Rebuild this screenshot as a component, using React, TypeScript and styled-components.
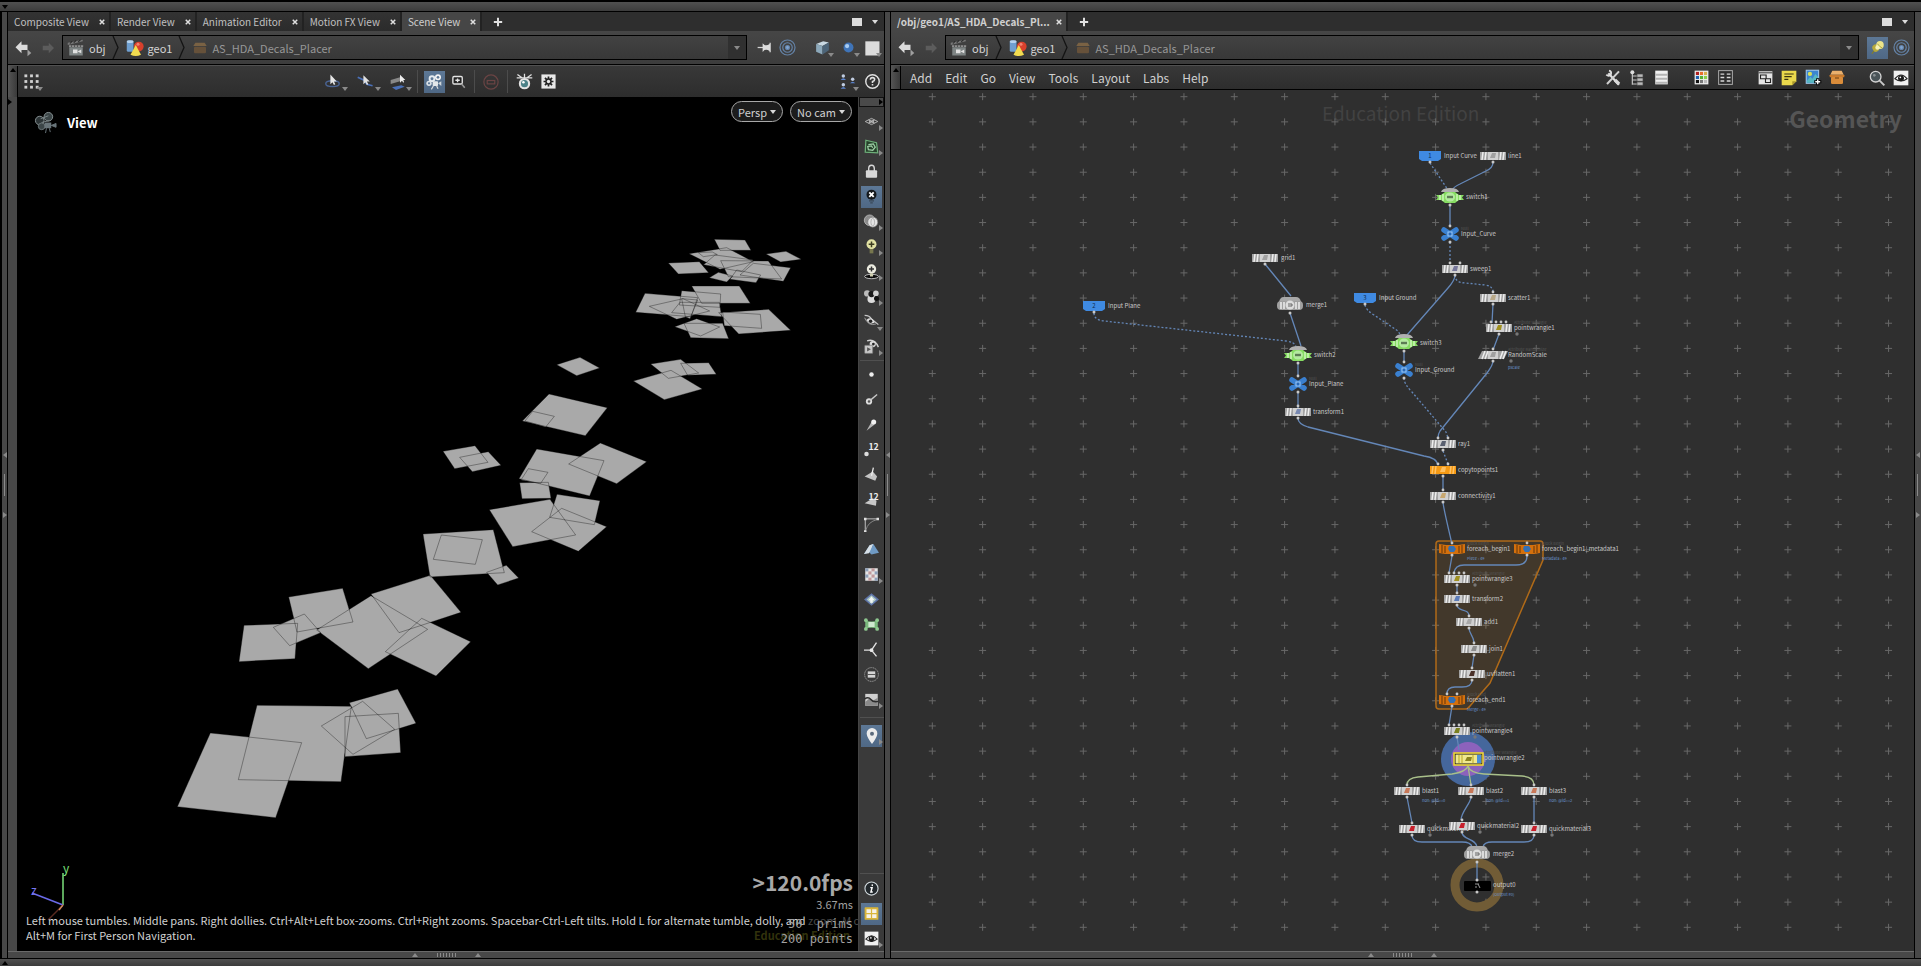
import React from "react";
import styled, { createGlobalStyle, css } from "styled-components";

const Global = createGlobalStyle`
  * { box-sizing: border-box; }
  body {
    margin: 0;
    background: #000;
    color: #c8c8c8;
    font: 11px/16px "Noto Sans CJK SC", "Noto Sans", sans-serif;
    overflow: hidden;
  }
  button, input {
    font: inherit;
    color: inherit;
    background: none;
    border: 0;
    padding: 0;
    margin: 0;
  }
  svg { display: block; }
`;

/* ---------- shell ---------- */

const Shell = styled.div`
  display: grid;
  grid-template-rows: 12px minmax(0, 1fr) 8px;
  height: 100vh;
`;

const Rail = styled.div<{ $bottom?: boolean }>`
  display: flex;
  align-items: center;
  padding-left: 2px;
  background: linear-gradient(#505050, #3c3c3c);
  border-top: ${(p) => (p.$bottom ? 1 : 2)}px solid #000;
  border-bottom: ${(p) => (p.$bottom ? 0 : 1)}px solid #000;
`;

const Desk = styled.div`
  display: flex;
  min-height: 0;
`;

const Splitter = styled.div<{ $width: number; $left?: number; $right?: number }>`
  flex: none;
  width: ${(p) => p.$width}px;
  display: flex;
  flex-direction: column;
  align-items: center;
  justify-content: center;
  gap: 16px;
  background: #484848;
  border: solid #000;
  border-width: 0 ${(p) => p.$right ?? 1}px 0 ${(p) => p.$left ?? 1}px;
`;

const Dots = styled.div<{ $vertical?: boolean }>`
  ${(p) => (p.$vertical ? "width: 4px; height: 22px;" : "width: 21px; height: 4px;")}
  background-image: radial-gradient(circle, #8a8a8a 34%, transparent 40%);
  background-size: 3px 2px;
`;

const Tri = styled.span<{ $dir: "up" | "down" | "left" | "right"; $size?: number; $color?: string }>`
  display: block;
  flex: none;
  width: 0;
  height: 0;
  ${(p) => {
    const s = p.$size ?? 3;
    const c = p.$color ?? "#8a8a8a";
    const side = { up: "bottom", down: "top", left: "right", right: "left" }[p.$dir];
    return css`
      border: ${s}px solid transparent;
      border-${side}: ${s + 1}px solid ${c};
      border-${{ bottom: "top", top: "bottom", right: "left", left: "right" }[side]!}-width: 0;
    `;
  }}
`;

const Pane = styled.section<{ $grow: number }>`
  flex: ${(p) => p.$grow} 1 0;
  min-width: 0;
  display: flex;
  flex-direction: column;
`;

const PaneFoot = styled.div`
  flex: none;
  height: 7px;
  display: flex;
  align-items: center;
  justify-content: center;
  gap: 18px;
  background: #484848;
  border-top: 1px solid #6a6a6a;
`;

/* ---------- tabs ---------- */

const TabBar = styled.div`
  flex: none;
  height: 19px;
  display: flex;
  align-items: stretch;
  background: #2e2e2e;
`;

const Tab = styled.div<{ $active?: boolean; $bold?: boolean }>`
  display: flex;
  align-items: center;
  padding: 0 4px 0 6px;
  gap: ${(p) => (p.$bold ? 6 : 10)}px;
  border-right: 2px solid #222;
  font-size: 10px;
  font-weight: ${(p) => (p.$bold ? 700 : 400)};
  color: ${(p) => (p.$active ? "#d0d0d0" : "#c0c0c0")};
  background: ${(p) => (p.$active ? "#464646" : "linear-gradient(#333, #2b2b2b)")};
`;

const Close = styled.button`
  width: 6px;
  height: 6px;
`;

const TabAdd = styled.button`
  width: 32px;
  display: grid;
  place-items: center;
`;

const TabEnd = styled.div`
  margin-left: auto;
  display: flex;
  align-items: center;
  gap: 10px;
  padding-right: 6px;
`;

const Square = styled.button`
  width: 10px;
  height: 8px;
  background: #dcdcdc;
`;

/* ---------- path bar ---------- */

const PathBar = styled.div`
  flex: none;
  height: 34px;
  display: flex;
  align-items: center;
  background: linear-gradient(#464646, #3c3c3c);
  border-bottom: 1px solid #000;
  padding: 0 1px 0 2px;
`;

const Path = styled.nav`
  flex: 1;
  min-width: 0;
  height: 25px;
  margin: 0 6px 0 2px;
  display: flex;
  align-items: center;
  border: 1px solid #000;
  background: linear-gradient(#424242, #383838);
`;

const Crumb = styled.a<{ $dim?: boolean }>`
  display: flex;
  align-items: center;
  gap: 4px;
  padding-left: 4px;
  color: ${(p) => (p.$dim ? "#979797" : "#d4d4d4")};
  text-decoration: none;
`;

const PathDrop = styled.button`
  margin-left: auto;
  align-self: stretch;
  width: 18px;
  display: grid;
  place-items: center;
  background: #303030;
`;

/* ---------- tool buttons ---------- */

const ToolButton = styled.button<{ $on?: boolean; $w?: number; $h?: number }>`
  position: relative;
  flex: none;
  width: ${(p) => p.$w ?? 24}px;
  height: ${(p) => p.$h ?? 24}px;
  display: grid;
  place-items: center;
  ${(p) => p.$on && "background: linear-gradient(#5d7896, #4f6885) center / 21px 22px no-repeat;"}
`;

const Badge = styled.span`
  position: absolute;
  right: 1px;
  bottom: 3px;
`;

const Gap = styled.span<{ $w: number }>`
  flex: none;
  width: ${(p) => p.$w}px;
`;

const Rule = styled.span`
  flex: none;
  width: 1px;
  height: 23px;
  margin: 0 4px;
  background: #4c4c4c;
`;

const Bar = styled.div<{ $h: number }>`
  flex: none;
  height: ${(p) => p.$h}px;
  display: flex;
  align-items: center;
  background: linear-gradient(#383838, #2d2d2d);
  border-top: 1px solid #505050;
`;

const Grip = styled.button<{ $w: number }>`
  flex: none;
  align-self: stretch;
  width: ${(p) => p.$w}px;
  display: flex;
  justify-content: center;
  padding-top: 2px;
  background: linear-gradient(90deg, #555, #3a3a3a);
  border-right: 1px solid #000;
`;

const Spring = styled.span`
  flex: 1;
`;

const Menu = styled.button`
  font-size: 12px;
  line-height: 20px;
  color: #d0d0d0;
`;

const Menus = styled.div`
  display: flex;
  gap: 13px;
  padding-left: 9px;
`;

/* ---------- viewport ---------- */

const ViewRow = styled.div`
  flex: 1;
  min-height: 0;
  display: flex;
`;

const ViewEdge = styled.div`
  flex: none;
  width: 9px;
  padding-top: 2px;
  background: #484848;
`;

const Viewport = styled.div`
  position: relative;
  flex: 1;
  min-width: 0;
  overflow: hidden;
  background: #000;
`;

const Fill = styled.svg`
  position: absolute;
  inset: 0;
  width: 100%;
  height: 100%;
`;

const ViewTitle = styled.div`
  position: absolute;
  left: 17px;
  top: 14px;
  display: flex;
  align-items: center;
  gap: 10px;
  font-size: 13px;
  font-weight: 700;
  color: #fff;
`;

const CamPills = styled.div`
  position: absolute;
  right: 6px;
  top: 4px;
  display: flex;
  gap: 7px;
`;

const Pill = styled.button`
  height: 21px;
  display: flex;
  align-items: center;
  gap: 3px;
  padding: 0 6px;
  border: 1px solid #a8a8a8;
  border-radius: 11px;
  background: #1c1c1c;
  color: #d0d0d0;
`;

const Hint = styled.p`
  position: absolute;
  left: 9px;
  bottom: 8px;
  margin: 0;
  line-height: 15px;
  white-space: nowrap;
  color: #d2d2d2;
`;

const Faint = styled.span`
  color: #4a4a4a;
`;

const Stats = styled.div`
  position: absolute;
  right: 5px;
  bottom: 4px;
  display: flex;
  flex-direction: column;
  align-items: flex-end;
  color: #a0a0a0;
`;

const Fps = styled.div`
  font-size: 21px;
  line-height: 26px;
  font-weight: 700;
  color: #a8a8a8;
`;

const Ms = styled.div`
  margin: 1px 0 5px;
`;

const Count = styled.pre`
  margin: 0;
  font: 12px/15px "DejaVu Sans Mono", monospace;
`;

const ViewMark = styled.div`
  position: absolute;
  right: 8px;
  bottom: 8px;
  line-height: 15px;
  font-weight: 700;
  color: #32320c;
`;

const Side = styled.div`
  flex: none;
  width: 26px;
  display: flex;
  flex-direction: column;
  align-items: center;
  background: #3a3a3a;
  border-left: 1px solid #444;
`;

const SideHead = styled.button`
  flex: none;
  width: 25px;
  height: 10px;
  margin-bottom: 2px;
  display: flex;
  align-items: center;
  justify-content: flex-end;
  background: #4a4a4a;
  border: 1px solid #111;
`;

const SideRule = styled.span<{ $m: number }>`
  flex: none;
  width: 24px;
  height: 1px;
  margin: ${(p) => p.$m}px 0;
  background: #505050;
`;

const Glyph = styled.svg`
  overflow: visible;
`;

/* ---------- icons ---------- */

const ICONS: Record<string, React.ReactNode> = {
  close: <path d="M9 9l6 6M15 9l-6 6" stroke="#e0e0e0" strokeWidth="2" />,
  plus: <path d="M12 7v10M7 12h10" stroke="#e0e0e0" strokeWidth="2.4" />,
  back: (
    <>
      <path d="M2 11l8-8v4.500h8v7h-8V19z" fill="#dcdcdc" />
      <path d="M18 14l5 4.500l-5 4.500z" fill="#a0a0a0" />
    </>
  ),
  fwd: <path d="M20 12l-7-7v4H5v6h8v4z" fill="#5c5c5c" />,
  obj: (
    <>
      <path d="M1 8l20-5v-2L1 5z" fill="#777" />
      <path d="M4 6l3-3M9 5l3-3M15 4l3-3" stroke="#222" strokeWidth="1.400" />
      <rect x="3" y="8" width="19" height="3" fill="#555" />
      <path d="M3 9.500h19" stroke="#bbb" strokeDasharray="2 2" strokeWidth="1.500" />
      <rect x="3" y="11" width="18" height="11" fill="#7e8484" />
      <rect x="8" y="14" width="6" height="5" fill="#e0e0e0" />
      <path d="M14 16.500l5-2.500v5z" fill="#e0e0e0" />
    </>
  ),
  geo: (
    <>
      <rect x="1" y="2" width="9" height="15" rx="2" fill="#6f9fd0" />
      <ellipse cx="5.500" cy="3.500" rx="4.500" ry="1.800" fill="#b5d2ee" />
      <circle cx="17" cy="10" r="6.500" fill="#d8402c" />
      <circle cx="16" cy="7" r="2" fill="#f08070" />
      <path d="M13 8l7 13q-7 3.500-14 0z" fill="#f2dc50" />
    </>
  ),
  box: (
    <>
      <path d="M5 4h14l3 5H2z" fill="#7a6244" />
      <rect x="3" y="10" width="18" height="10" rx="2" fill="#66513a" />
    </>
  ),
  pin: (
    <>
      <path d="M1 12h9" stroke="#d4d4d4" strokeWidth="2" />
      <path d="M9 5l3 3q4 1.500 8-1.500v-2h2v15h-2v-2q-4-3-8-1.500l-3 3z" fill="#dcdcdc" />
    </>
  ),
  target: (
    <g fill="none" stroke="#6483a8" strokeWidth="1.500">
      <circle cx="12" cy="12" r="9.500" />
      <circle cx="12" cy="12" r="6" />
      <circle cx="12" cy="12" r="2.500" fill="#7fa5d2" />
    </g>
  ),
  cube: (
    <>
      <path d="M3 7l10-4 8 2-9 5z" fill="#c8d8e2" />
      <path d="M3 7l9 3v12l-9-4z" fill="#8ca8ba" />
      <path d="M12 10l9-5v11l-9 6z" fill="#4c6478" />
    </>
  ),
  ball: (
    <>
      <circle cx="12" cy="12" r="7" fill="#3f74b8" />
      <circle cx="10" cy="10" r="3" fill="#a9ccf0" />
    </>
  ),
  sheet: <rect x="4" y="4" width="17" height="17" fill="#dcdcdc" />,
  dots: (
    <g fill="#d0d0d0">
      {[4, 12, 20].map((y) => [4, 12, 20].map((x) => <rect key={`${x}-${y}`} x={x - 2} y={y - 2} width="4" height="4" />))}
    </g>
  ),
  lasso: (
    <>
      <ellipse cx="12" cy="15" rx="9.500" ry="4" fill="none" stroke="#4a6494" strokeWidth="2" />
      <path d="M9 2v14l3-3 2 4 2-1-2-4h4z" fill="#e6e6e6" />
    </>
  ),
  brush: (
    <>
      <path d="M1 6l9 4 4 6 8 2" fill="none" stroke="#4a70b8" strokeWidth="2.500" />
      <path d="M9 3v13l3-3 2 4 2-1-2-4h4z" fill="#e0e0e0" />
    </>
  ),
  slice: (
    <>
      <path d="M1 9l14-4v6L1 15z" fill="#888" />
      <path d="M3 20l14-3 5 2-13 5z" fill="#4a70b8" />
      <path d="M15 1v12l3-3 2 3 1-1-1-3h3z" fill="#eee" />
    </>
  ),
  camera: (
    <>
      <circle cx="9" cy="7" r="5" fill="#e6ecf0" />
      <circle cx="18" cy="5" r="4.500" fill="#f4f4f4" />
      <circle cx="4.500" cy="14" r="4" fill="#dde3e8" />
      <circle cx="9" cy="7" r="2.200" fill="#5d7896" />
      <circle cx="18" cy="5" r="2" fill="#5d7896" />
      <circle cx="4.500" cy="14" r="1.700" fill="#5d7896" />
      <rect x="10" y="11" width="8" height="7" rx="1" fill="#e4e8ea" />
      <path d="M18 14l5-3v7z" fill="#cfd6da" />
      <path d="M11 18l-3 5M16 18l2 4" stroke="#ddd" strokeWidth="1.800" />
    </>
  ),
  camDim: (
    <>
      <circle cx="6" cy="10" r="4.500" fill="#2c3436" stroke="#8a9496" />
      <circle cx="15" cy="6" r="4.500" fill="#3c4648" stroke="#8a9496" />
      <circle cx="8" cy="16" r="3.500" fill="#3c4648" stroke="#6a7476" />
      <path d="M7 8l8-3M8 12l8-2" stroke="#7a8688" />
      <rect x="11" y="12" width="7" height="6" fill="#69757a" />
      <path d="M18 15l5-2v4zM13 18l-1 5M16 18l1 4" fill="#69757a" stroke="#69757a" />
    </>
  ),
  zoomBox: (
    <>
      <rect x="3" y="4" width="15" height="12" rx="2" fill="#222" stroke="#e4e4e4" strokeWidth="2.200" />
      <path d="M10.500 7v6M7 10h7" stroke="#e4e4e4" strokeWidth="2.200" />
      <path d="M17 16l5 6" stroke="#999" strokeWidth="2.400" />
    </>
  ),
  stop: (
    <g fill="none" stroke="#6b4444" strokeWidth="1.600">
      <circle cx="12" cy="12" r="9.500" />
      <rect x="7" y="10" width="10" height="4.500" />
    </g>
  ),
  orb: (
    <>
      <path d="M2 2l7 5M22 2l-7 5M1 7h22M12 1v6" stroke="#e0e0e0" strokeWidth="1.800" />
      <circle cx="12" cy="15" r="8" fill="#e4e4e4" />
      <circle cx="12" cy="15" r="5" fill="#4c8288" />
      <circle cx="10.500" cy="13" r="1.800" fill="#fff" />
    </>
  ),
  gear: (
    <>
      <rect x="2" y="2" width="20" height="20" fill="#e8e8e8" />
      <path d="M12 5v14M5 12h14M7 7l10 10M17 7L7 17" stroke="#222" strokeWidth="2.400" />
      <circle cx="12" cy="12" r="4.500" fill="#222" />
      <circle cx="12" cy="12" r="2.400" fill="#e8e8e8" />
    </>
  ),
  people: (
    <g>
      {[[5, 3], [19, 8], [5, 16]].map(([x, y]) => (
        <g key={`${x}-${y}`}>
          <circle cx={x} cy={y} r="2.600" fill="#c0cce0" />
          <path d={`M${x - 4} ${y + 6}q4-5 8 0z`} fill="#5a84d0" />
        </g>
      ))}
    </g>
  ),
  help: (
    <>
      <circle cx="12" cy="12" r="9.500" fill="none" stroke="#e0e0e0" strokeWidth="2" />
      <path d="M9 9.500q0-3 3-3t3 2.500q0 2-3 3v2M12 15.500v2.200" fill="none" stroke="#e0e0e0" strokeWidth="2.200" />
    </>
  ),
  yellowPin: (
    <>
      <path d="M3 22l6-8" stroke="#8a8020" strokeWidth="1.800" />
      <ellipse cx="9" cy="13" rx="5" ry="6" fill="#b8aa3c" transform="rotate(-30 9 13)" />
      <ellipse cx="16" cy="8" rx="6" ry="6.500" fill="#ece58a" />
      <circle cx="12" cy="12" r="3.500" fill="#f6f2b8" />
      <path d="M12 6q3 5 8 7" fill="none" stroke="#a09430" strokeWidth="1.200" />
    </>
  ),
  plane: (
    <g fill="none" stroke="#bcbcbc" strokeWidth="1.400">
      <path d="M2 12l10-5 10 5-10 5zM7 9.500l10 5M17 9.500l-10 5M12 10l4 2-4 2-4-2z" />
    </g>
  ),
  greenBox: (
    <>
      <path d="M3 2l17 4 2 16-20-1z" fill="#26412a" stroke="#6eb07a" strokeWidth="2" />
      <path d="M7 9l8-1 3 5-4 5-7-1-1-5 6-1 2 3" fill="none" stroke="#a0d0a8" strokeWidth="2" />
    </>
  ),
  lock: (
    <>
      <path d="M7.500 12V7a4.500 5 0 0 1 9 0v5" fill="none" stroke="#d8d8d8" strokeWidth="2.200" />
      <rect x="3" y="10" width="18" height="12" rx="1.500" fill="#d8d8d8" />
    </>
  ),
  bulbOff: (
    <>
      <circle cx="12" cy="9" r="8" fill="#14181c" />
      <path d="M8.500 5.500l7 7M15.500 5.500l-7 7" stroke="#fff" strokeWidth="3" />
      <path d="M8 19h8M10 22h4" stroke="#3a4858" strokeWidth="2" />
    </>
  ),
  rings: (
    <>
      <circle cx="9" cy="10" r="8.500" fill="#8c8c8c" stroke="#d8d8d8" />
      <circle cx="14" cy="13" r="8" fill="#e4e4e4" stroke="#777" />
      <ellipse cx="14" cy="13" rx="3" ry="6" fill="none" stroke="#999" />
    </>
  ),
  bulbAdd: (
    <>
      <circle cx="12" cy="8.500" r="8" fill="#e2e2a4" />
      <path d="M12 4v9M7.500 8.500h9" stroke="#3c3c20" strokeWidth="2.400" />
      <path d="M9 16h6v7H9z" fill="#77774e" />
    </>
  ),
  bulbFloor: (
    <>
      <ellipse cx="12" cy="20" rx="11" ry="3.500" fill="#0c0c0c" stroke="#ddd" strokeWidth="1.300" />
      <circle cx="12" cy="8" r="7.500" fill="#ecece0" />
      <path d="M12 4v8M8 8h8" stroke="#333" strokeWidth="2.400" />
      <path d="M9.500 15h5v5h-5z" fill="#d0d0b0" />
    </>
  ),
  shades: (
    <>
      <circle cx="5" cy="7" r="5" fill="#bbb" />
      <circle cx="12" cy="16" r="6.500" fill="#dcdcdc" />
      <circle cx="12" cy="8" r="5" fill="#1a1a1a" />
      <circle cx="19" cy="7" r="4.500" fill="#d0d0d0" />
      <circle cx="20" cy="15" r="4" fill="#111" />
    </>
  ),
  eyeCut: (
    <>
      <path d="M1 2q8 0 11 6l11 9" fill="none" stroke="#c8c8c8" strokeWidth="2" />
      <path d="M1 6q6 14 18 10" fill="none" stroke="#aaa" strokeWidth="1.400" />
      <path d="M4 9q9-6 13 5q-9 4-13-5z" fill="#ddd" />
      <circle cx="10.500" cy="11.500" r="2.800" fill="#222" />
    </>
  ),
  eyePlay: (
    <>
      <path d="M5 3q12-4 18 10" fill="none" stroke="#d0d0d0" strokeWidth="2.200" />
      <circle cx="14" cy="8" r="5" fill="#dcdcdc" />
      <circle cx="15" cy="8" r="2.200" fill="#222" />
      <rect x="1" y="10" width="13" height="13" rx="1" fill="#c8c8c8" stroke="#666" />
      <path d="M5 13v7l6-3.500z" fill="#555" />
    </>
  ),
  dot: <circle cx="12" cy="12" r="3.600" fill="#eee" />,
  dotLine: (
    <>
      <circle cx="8" cy="15" r="5" fill="#ddd" />
      <path d="M8 15L21 4" stroke="#c8c8c8" strokeWidth="2.200" />
      <circle cx="8" cy="15" r="2" fill="#555" />
    </>
  ),
  dart: (
    <>
      <path d="M4 22l8-14 5 4z" fill="#b4b4b4" />
      <circle cx="15.500" cy="8" r="4" fill="#f0f0f0" />
    </>
  ),
  facePin: (
    <>
      <path d="M1 15l13-8 7 8-3 7z" fill="#c4c4c4" />
      <path d="M12 14l3-13" stroke="#f0f0f0" strokeWidth="2" />
    </>
  ),
  corner: (
    <>
      <path d="M2 23V3h20" fill="none" stroke="#c0c0c0" strokeWidth="1.600" />
      <path d="M3 21Q6 8 21 4" fill="none" stroke="#909090" strokeWidth="1.400" />
      <path d="M0 1h4v4H0zM20 1h4v4h-4zM0 21h4v3H0z" fill="#e0e0e0" />
    </>
  ),
  fold: (
    <>
      <path d="M0 19L9 5l6-2-4 13z" fill="#8fb4d6" />
      <path d="M0 19l8-1 7-15-6 2z" fill="#d6dfe6" />
      <path d="M15 3l9 14-12 3-3-3z" fill="#6f9ac4" />
    </>
  ),
  checker: (
    <>
      <rect x="2" y="2" width="20" height="20" fill="#e4e4e4" />
      {[0, 1, 2, 3].map((r) =>
        [0, 1].map((c) => (
          <rect key={`${r}${c}`} x={2 + (c * 2 + (r % 2)) * 5} y={2 + r * 5} width="5" height="5" fill={(r + c) % 2 ? "#c09a9c" : "#8d9fb8"} />
        )),
      )}
    </>
  ),
  diamond: (
    <>
      <path d="M12 2l12 10-12 10L0 12z" fill="#5f74a8" />
      <path d="M12 5l8 7-8 7-8-7z" fill="#a9c6c0" />
      <path d="M7 13l5-6 5 6h-3v4h-4v-4z" fill="#f2f6f4" />
    </>
  ),
  cage: (
    <>
      <path d="M2 5q4 2 10 2t10-2v14q-4-2-10-2T2 19z" fill="#79b87c" />
      <rect x="7" y="8" width="10" height="8" fill="#cfe8cf" />
      <g fill="#8fca90">
        <circle cx="3" cy="5" r="3" />
        <circle cx="21" cy="5" r="3" />
        <circle cx="3" cy="19" r="3" />
        <circle cx="21" cy="19" r="3" />
      </g>
    </>
  ),
  axes: (
    <>
      <path d="M12 13H0M12 13l8-12M12 13l8 10" fill="none" stroke="#e0e0e0" strokeWidth="2.200" />
      <circle cx="12" cy="13" r="3" fill="#e8e8e8" />
    </>
  ),
  listRing: (
    <>
      <circle cx="12" cy="12" r="11" fill="none" stroke="#a0a0a0" strokeWidth="1.500" strokeDasharray="2 1" />
      <rect x="6" y="7" width="12" height="10" fill="#d4d4d4" />
      <path d="M6 12h12" stroke="#444" strokeWidth="1.400" />
    </>
  ),
  imageOff: (
    <>
      <rect x="2" y="3" width="20" height="19" fill="#d0d0d0" />
      <path d="M2 16l7-6 5 4 8-5v13H2z" fill="#8a8a8a" />
      <path d="M1 11q6-4 10 1t12 3" fill="none" stroke="#2c2c2c" strokeWidth="2.400" />
    </>
  ),
  marker: (
    <>
      <path d="M12 0a8 8 0 0 1 8 8.500Q19.500 14 12 24Q4.500 14 4 8.500A8 8 0 0 1 12 0z" fill="#ececec" />
      <circle cx="12" cy="8.500" r="3" fill="#5a6a7c" />
    </>
  ),
  info: (
    <>
      <circle cx="12" cy="12" r="10.500" fill="#22282c" stroke="#d0d8dc" strokeWidth="1.800" />
      <path d="M13.500 5.500l-.5 2.500M10 10.500h3l-2 7h3" fill="none" stroke="#fff" strokeWidth="2.200" />
    </>
  ),
  quad: (
    <>
      <rect x="1" y="2" width="22" height="20" rx="1" fill="#d9b53a" />
      <path d="M4 5h7v6H4zM13 5h7v6h-7zM4 13h7v6H4zM13 13h7v6h-7z" fill="#f6f2e8" />
    </>
  ),
  eyeBox: (
    <>
      <rect x="1" y="1" width="22" height="22" fill="#f0f0f0" />
      <path d="M3 13q9-11 18 0q-9 7-18 0z" fill="#fff" stroke="#222" strokeWidth="1.800" />
      <circle cx="12" cy="12.500" r="4.500" fill="#1c1c1c" />
      <circle cx="11" cy="11" r="1.300" fill="#fff" />
    </>
  ),
  tools: (
    <>
      <path d="M5 5l16 17" stroke="#e0e0e0" strokeWidth="3.400" />
      <path d="M21 2L3 21" stroke="#d0d0d0" strokeWidth="3" />
      <path d="M2 7q4 4 7-1q1-4-3-5" fill="none" stroke="#e0e0e0" strokeWidth="2.800" />
      <path d="M15 15l6 6" stroke="#d8d8d8" strokeWidth="5" />
    </>
  ),
  tree: (
    <>
      <path d="M5 5v17M5 9h7M5 15h7M5 21h7" fill="none" stroke="#c4c4c4" strokeWidth="1.800" />
      <circle cx="5" cy="3.500" r="3" fill="#ddd" />
      <path d="M12 6h9v5h-9zM12 12h9v5h-9zM12 18h9v5h-9z" fill="#b8b8b8" stroke="#444" />
    </>
  ),
  rows: (
    <>
      <rect x="2" y="1" width="20" height="22" fill="#f0f0f0" />
      <path d="M2 7.500h20M2 14h20M2 20.500h20" stroke="#b4b4b4" strokeWidth="3.200" />
    </>
  ),
  palette: (
    <>
      <rect x="1" y="1" width="22" height="22" fill="#eee" />
      {["#b02020", "#e8702c", "#d8b04c", "#1f5fb0", "#57b034", "#8cd04c", "#111", "#777", "#bbb"].map((c, i) => (
        <rect key={c} x={3 + (i % 3) * 6.5} y={3 + Math.floor(i / 3) * 6.5} width="5" height="5" fill={c} />
      ))}
    </>
  ),
  listBox: (
    <>
      <rect x="1" y="1" width="22" height="22" fill="#2c2c2c" stroke="#aaa" strokeWidth="1.600" />
      {[6.5, 12, 17.5].map((y) => (
        <path key={y} d={`M4 ${y}h6M14 ${y}h6`} stroke="#d8d8d8" strokeWidth="2.200" />
      ))}
    </>
  ),
  boxes: (
    <>
      <path d="M1 2h22v21H1z" fill="#e4e4e4" />
      <path d="M1 4.500h22" stroke="#2c2c2c" strokeWidth="1.500" />
      <path d="M4 8h9v6H4zM12 14h8v6h-8z" fill="#e4e4e4" stroke="#222" strokeWidth="1.800" />
    </>
  ),
  note: (
    <>
      <path d="M1 1h22v16l-6 6H1z" fill="#ead94c" />
      <path d="M17 23v-6h6z" fill="#a8962c" />
      <path d="M5 6h14M5 10h11M5 14h6" stroke="#3a3410" strokeWidth="1.800" />
    </>
  ),
  picture: (
    <>
      <rect x="1" y="1" width="19" height="20" fill="#9fc4e6" />
      <rect x="2.500" y="2.500" width="16" height="17" fill="#3c86d0" />
      <path d="M2.500 17l5-6 3 3 4-7 4 4v8.500h-16z" fill="#58b8c0" />
      <circle cx="7" cy="7" r="3" fill="#d8e058" />
      <path d="M18 13v10M13 18h10" stroke="#000" strokeWidth="4.500" />
      <path d="M18 14.500v7M14.500 18h7" stroke="#fff" strokeWidth="2" />
    </>
  ),
  crate: (
    <>
      <path d="M5 1h14l3 6H2z" fill="#eab06c" />
      <rect x="1" y="7" width="22" height="4" rx="1" fill="#c87a2c" />
      <rect x="3" y="10" width="18" height="11" rx="2" fill="#d98c3a" />
      <path d="M9 12h6" stroke="#7a4a18" strokeWidth="1.800" />
    </>
  ),
  search: (
    <>
      <path d="M16 16l7 7" stroke="#c8c8c8" strokeWidth="3" />
      <circle cx="10" cy="10" r="8" fill="#4a5458" stroke="#d4d4d4" strokeWidth="2" />
      <circle cx="8" cy="8" r="2" fill="#8a9094" />
    </>
  ),
};

const TWELVE: Record<string, React.ReactNode> = {
  pt12: <circle cx="4" cy="19" r="3.600" fill="#ddd" />,
  face12: <path d="M1 18l13-8 6 4-1 8z" fill="#c8c8c8" />,
};

function Icon({ name, size = 17 }: { name: string; size?: number }) {
  return (
    <Glyph width={size} height={size} viewBox="0 0 24 24" aria-hidden="true">
      {ICONS[name] ?? (
        <>
          {TWELVE[name]}
          <text x="7" y="12" fontSize="14" fontWeight="700" fill="#eee">
            12
          </text>
        </>
      )}
    </Glyph>
  );
}

type ToolProps = { icon: string; label: string; on?: boolean; drop?: "down" | "right"; w?: number; h?: number; size?: number };

function Tool({ icon, label, on, drop, w, h, size }: ToolProps) {
  return (
    <ToolButton aria-label={label} title={label} $on={on} $w={w} $h={h}>
      <Icon name={icon} size={size} />
      {drop && (
        <Badge>
          <Tri $dir={drop} />
        </Badge>
      )}
    </ToolButton>
  );
}

function PaneTab({ title, active, bold }: { title: string; active?: boolean; bold?: boolean }) {
  return (
    <Tab $active={active} $bold={bold}>
      <button role="tab" aria-selected={!!active}>
        {title}
      </button>
      <Close aria-label={`Close ${title}`}>
        <svg width="6" height="6" viewBox="8 8 8 8">
          {ICONS.close}
        </svg>
      </Close>
    </Tab>
  );
}

function TabTail() {
  return (
    <>
      <TabAdd aria-label="New tab">
        <Icon name="plus" size={20} />
      </TabAdd>
      <TabEnd>
        <Square aria-label="Maximize pane" />
        <Tri $dir="down" $color="#dcdcdc" />
      </TabEnd>
    </>
  );
}

function Chevron() {
  return (
    <svg width="12" height="23" viewBox="0 0 12 23" aria-hidden="true">
      <path d="M3 0l5 11.500L3 23" fill="none" stroke="#141414" strokeWidth="1.300" />
    </svg>
  );
}

function PathField() {
  return (
    <Path aria-label="Network path">
      <Crumb href="#obj">
        <Icon name="obj" size={18} />
        obj
      </Crumb>
      <Gap $w={4} />
      <Chevron />
      <Crumb href="#geo1">
        <Icon name="geo" size={18} />
        geo1
      </Crumb>
      <Gap $w={4} />
      <Chevron />
      <Crumb href="#placer" $dim>
        <Icon name="box" size={16} />
        AS_HDA_Decals_Placer
      </Crumb>
      <PathDrop aria-label="Path history">
        <Tri $dir="down" />
      </PathDrop>
    </Path>
  );
}

function Foot() {
  return (
    <PaneFoot>
      <Tri $dir="up" />
      <Dots />
      <Tri $dir="up" />
    </PaneFoot>
  );
}

/* ---------- scene ---------- */

const NEAR = [
  "151,909 425,938 347,1163 52,1130",
  "291,826 574,829 543,1055 235,1049",
  "608,814 704,898 579,973 484,888",
  "568,818 713,777 768,880 619,926",
  "555,860 715,850 722,968 555,980",
  "386,501 548,475 579,576 411,606",
  "252,586 413,580 405,686 237,695",
  "340,592 433,552 482,608 389,647",
  "633,497 803,598 625,716 470,600",
  "633,492 811,436 903,547 717,608",
  "785,565 932,635 828,738 676,665",
  "789,312 1000,299 1033,428 810,441",
  "844,315 967,329 946,403 820,388",
  "980,427 1039,406 1076,444 1013,465",
  "988,239 1170,208 1247,315 1058,350",
  "1191,193 1320,212 1303,284 1169,262",
  "1205,235 1340,290 1255,364 1115,305",
  "1079,158 1165,157 1173,205 1086,206",
  "1130,57 1332,92 1289,198 1077,146",
  "1105,116 1164,127 1142,160 1083,150",
  "1321,39 1460,95 1370,161 1226,102",
  "849,64 945,47 984,97 884,116",
  "899,82 985,65 1023,106 937,125",
];

const FAR = [
  "207,522 382,563 316,647 127,603",
  "158,574 223,589 197,621 135,603",
  "230,434 300,412 359,444 290,467",
  "512,432 602,418 656,459 565,475",
  "573,451 667,507 553,539 460,483",
  "602,430 686,428 709,463 623,466",
  "495,220 653,233 633,290 467,277",
  "605,212 722,222 720,262 598,255",
  "635,198 778,198 811,250 665,250",
  "609,236 689,273 590,298 508,259",
  "600,247 718,247 725,290 575,278",
  "605,236 653,240 630,296 616,290",
  "716,278 866,268 932,331 776,342",
  "728,276 841,283 845,325 733,317",
  "650,296 719,321 662,348 584,320",
  "612,310 728,310 746,356 632,353",
  "565,129 658,125 686,158 595,162",
  "703,58 795,60 813,91 720,91",
  "858,102 918,94 964,118 902,126",
  "627,101 740,83 820,125 720,148",
  "688,173 715,157 758,168 740,186",
  "671,134 705,105 820,120 785,155",
  "722,122 865,123 905,177 745,170",
  "820,130 932,143 910,184 780,165",
  "770,150 842,165 828,188 750,178",
  "655,98 697,96 712,104 670,110",
];

function Decals({ look }: { look: object }) {
  return (
    <g {...look}>
      <g transform="translate(160 430) scale(.33333)">
        {NEAR.map((p) => (
          <polygon key={p} points={p} />
        ))}
      </g>
      <g transform="translate(480 220) scale(.33333)">
        {FAR.map((p) => (
          <polygon key={p} points={p} />
        ))}
      </g>
    </g>
  );
}

function Scene() {
  return (
    <Fill viewBox="17 97 841 854" role="img" aria-label="Scattered decals">
      <Decals look={{ fill: "#a9a9a9" }} />
      <Decals look={{ fill: "none", stroke: "#000", strokeOpacity: 0.4, strokeWidth: 2.5 }} />
      <g fill="none" strokeWidth="1.500">
        <path d="M63 905V873" stroke="#7be07b" />
        <path d="M63 905L32 893" stroke="#6a6ae8" />
        <path d="M63 905l-15 15" stroke="#5a2a20" />
        <path d="M63 905l-4 5" stroke="#d08860" />
      </g>
      <text x="63" y="873" fontSize="12" fill="#7be07b">y</text>
      <text x="31" y="895" fontSize="12" fill="#7676f0">z</text>
    </Fill>
  );
}

/* ---------- network ---------- */

type Kind = "sop" | "switch" | "merge" | "null" | "input" | "block" | "vop";
type NodeSpec = {
  x: number;
  y: number;
  name: string;
  kind?: Kind;
  color?: string;
  glyph?: string;
  above?: string;
  below?: string;
  num?: string;
  ins?: number;
  dx?: number;
  flag?: boolean;
};

const NODES: NodeSpec[] = [
  { x: 1430, y: 156, name: "Input Curve", kind: "input", num: "1", dx: 14 },
  { x: 1493, y: 156, name: "line1", ins: 0 },
  { x: 1450, y: 197, name: "switch1", kind: "switch", dx: 16 },
  { x: 1450, y: 234, name: "Input_Curve", kind: "null", above: "Null", dx: 11 },
  { x: 1455, y: 269, name: "sweep1", glyph: "#77779a", ins: 2 },
  { x: 1265, y: 258, name: "grid1", ins: 0, dx: 16 },
  { x: 1290, y: 305, name: "merge1", kind: "merge", dx: 16 },
  { x: 1298, y: 355, name: "switch2", kind: "switch", dx: 16 },
  { x: 1298, y: 384, name: "Input_Plane", kind: "null", above: "Null", dx: 11 },
  { x: 1298, y: 412, name: "transform1", glyph: "#7888b0" },
  { x: 1094, y: 306, name: "Input Plane", kind: "input", num: "2", dx: 14 },
  { x: 1365, y: 298, name: "Input Ground", kind: "input", num: "3", dx: 14 },
  { x: 1404, y: 343, name: "switch3", kind: "switch", dx: 16 },
  { x: 1404, y: 370, name: "Input_Ground", kind: "null", above: "Null", dx: 11 },
  { x: 1493, y: 298, name: "scatter1", glyph: "#b8a888" },
  { x: 1499, y: 328, name: "pointwrangle1", above: "Attribute Wrangle", glyph: "#a09020", ins: 4, flag: true },
  { x: 1493, y: 355, name: "RandomScale", kind: "vop", above: "Attribute Randomize", below: "pscale", flag: true },
  { x: 1443, y: 444, name: "ray1", glyph: "#5a6070", ins: 2 },
  { x: 1443, y: 470, name: "copytopoints1", color: "#f59a14", glyph: "#ffc060", ins: 2 },
  { x: 1443, y: 496, name: "connectivity1", glyph: "#c8a870" },
  { x: 1452, y: 549, name: "foreach_begin1", kind: "block", above: "Block Begin", below: "Piece : 49" },
  { x: 1527, y: 549, name: "foreach_begin1_metadata1", kind: "block", above: "Block Begin", below: "Metadata : 49" },
  { x: 1457, y: 579, name: "pointwrangle3", above: "Attribute Wrangle", glyph: "#a09020", ins: 4, flag: true },
  { x: 1457, y: 599, name: "transform2", glyph: "#5c7cb8" },
  { x: 1469, y: 622, name: "add1", glyph: "#a8a8a8" },
  { x: 1474, y: 649, name: "join1", glyph: "#8c8c8c" },
  { x: 1472, y: 674, name: "uvflatten1", glyph: "#4a3028" },
  { x: 1452, y: 700, name: "foreach_end1", kind: "block", above: "Block End", below: "Merge : 49", ins: 2 },
  { x: 1457, y: 731, name: "pointwrangle4", above: "Attribute Wrangle", glyph: "#7a8020", ins: 4, flag: true },
  { x: 1407, y: 791, name: "blast1", glyph: "#c87858", below: "non: @id==0" },
  { x: 1471, y: 791, name: "blast2", glyph: "#c87858", below: "non: @id==1" },
  { x: 1534, y: 791, name: "blast3", glyph: "#c87858", below: "non: @id==2" },
  { x: 1412, y: 829, name: "quickmaterial1", glyph: "#c8202c", flag: true },
  { x: 1462, y: 826, name: "quickmaterial2", glyph: "#c8202c", flag: true },
  { x: 1534, y: 829, name: "quickmaterial3", glyph: "#c8202c", flag: true },
  { x: 1477, y: 854, name: "merge2", kind: "merge", dx: 16 },
];

const WIRES = [
  "M1493 162Q1493 168 1486 171L1460 184Q1453 187 1452 191",
  "M1450 205V226",
  "M1265 264L1291 296",
  "M1290 313L1301 346",
  "M1298 363V376M1298 392V408",
  "M1455 275Q1455 280 1448 288L1407 335",
  "M1404 351V362",
  "M1493 304L1492 323",
  "M1499 334L1493 350",
  "M1493 361Q1493 365 1487 373L1440 431Q1438 434 1438 438",
  "M1298 418Q1298 424 1308 427L1424 456Q1437 458 1438 465",
  "M1443 476V490",
  "M1443 502Q1443 506 1452 544",
  "M1452 556L1449 573",
  "M1527 556Q1527 565 1516 565H1464Q1455 565 1454 573",
  "M1457 586V593",
  "M1457 605C1457 612 1469 608 1469 616",
  "M1469 628C1469 634 1474 636 1474 643",
  "M1474 655L1472 668",
  "M1472 680Q1472 687 1462 687H1455Q1447 687 1447 694",
  "M1452 706L1449 725",
  "M1457 737L1459 750",
  "M1407 797L1412 823",
  "M1471 797C1471 803 1461 812 1461 820",
  "M1534 797V822",
  "M1412 835Q1412 842 1422 842H1462Q1471 842 1472 847",
  "M1462 832C1462 840 1476 838 1477 847",
  "M1534 835Q1534 842 1524 842H1492Q1484 842 1483 847",
  "M1477 863V880",
];

const DASHED = [
  "M1430 163L1448 190",
  "M1450 242V264",
  "M1455 275Q1455 283 1466 283L1485 285Q1493 286 1493 292",
  "M1365 305Q1366 310 1374 315L1398 331L1401 336",
  "M1094 313Q1094 320 1104 321L1286 341Q1295 342 1296 347",
  "M1404 378Q1404 384 1412 392L1446 432L1448 438",
  "M1443 451L1448 464",
];

const portFill = "#c8c8c8";

function NodeBody({ n }: { n: NodeSpec }) {
  const { x, y, kind = "sop", glyph = "#a0a0a0" } = n;
  if (kind === "input") {
    return (
      <>
        <path d={`M${x - 11} ${y - 5}h22v8l-3 2h-16l-3-2z`} fill="#3f8ae2" />
        <text x={x} y={y + 2} fontSize="6" textAnchor="middle" fill="#102c50">
          {n.num}
        </text>
      </>
    );
  }
  if (kind === "null") {
    return (
      <g stroke="#3a80d0" strokeWidth="5.500" strokeLinecap="round">
        <path d={`M${x - 6} ${y - 4}l12 8M${x + 6} ${y - 4}l-12 8M${x - 2} ${y}h4`} />
        <rect x={x - 2} y={y - 2} width="4" height="4" fill="#2868b8" stroke="#9ccaf8" strokeWidth="1" />
      </g>
    );
  }
  if (kind === "switch") {
    return (
      <>
        <path d={`M${x - 9} ${y - 5}q1-4 9-4t9 4z`} fill="#b0b0b0" />
        <path d={`M${x - 14} ${y - 2}h5l4-3h10l4 3h5l-2 2.500 2 2.500h-5l-4 3h-10l-4-3h-5l2-2.500z`} fill="#86dc62" />
        <path d={`M${x - 10} ${y - 2}v5M${x - 7} ${y - 3}v7M${x + 7} ${y - 3}v7M${x + 10} ${y - 2}v5`} stroke="#d8f8c8" strokeWidth="1.300" />
        <ellipse cx={x} cy={y} rx="5" ry="4.500" fill="#b4eaa0" />
        <path d={`M${x - 3} ${y}h6`} stroke="#5c7c54" strokeWidth="2.400" />
      </>
    );
  }
  if (kind === "merge") {
    return (
      <>
        <path d={`M${x - 11} ${y - 3}q1-5 5-5h12q4 0 5 5z`} fill="#a8a8a8" />
        <rect x={x - 13} y={y - 4} width="26" height="9" rx="4" fill="#a0a0a0" />
        <path d={`M${x - 9} ${y - 3}v7M${x - 6} ${y - 3}v7M${x + 6} ${y - 3}v7M${x + 9} ${y - 3}v7`} stroke="#eee" strokeWidth="1.500" />
        <circle cx={x} cy={y} r="4.500" fill="#ddd" />
        <path d={`M${x - 2} ${y - 1}h4v2h-4`} fill="none" stroke="#666" />
      </>
    );
  }
  if (kind === "block") {
    return (
      <>
        <path d={`M${x - 13} ${y - 5}l7 1h12l7-1v9l-6 1h-14l-6-1z`} fill="#d4700c" />
        <path d={`M${x - 10} ${y - 4}v8M${x - 7} ${y - 3}v7M${x + 7} ${y - 3}v7M${x + 10} ${y - 4}v8`} stroke="#7c420c" strokeWidth="1.300" />
        <path d={`M${x - 3} ${y - 3}h5l2 3-2 3h-4l-2-3z`} fill="#3470b4" />
      </>
    );
  }
  const fill = n.color ?? "#a2a2a2";
  const light = n.color ? "#ffc266" : "#eee";
  const slant = kind === "vop" ? 3 : 1;
  return (
    <>
      <path d={`M${x - 13 + (slant > 1 ? 2 : 0)} ${y - 4}h26l${slant > 1 ? -4 : 0} 8h-26z`} fill={fill} />
      <path
        d={[-11, -8, 7, 10].map((o) => `M${x + o + slant} ${y - 4}l${-slant} 8`).join("")}
        stroke={light}
        strokeWidth="1.500"
      />
      <rect x={x - 5} y={y - 4} width="10" height="8" fill={n.color ?? "#d0d0d0"} />
      <path d={`M${x - 3} ${y + 2}l2-5h4l-1 5z`} fill={glyph} />
    </>
  );
}

function NetNode({ n }: { n: NodeSpec }) {
  const { x, y, kind = "sop", dx = 15 } = n;
  const ins = n.ins ?? (kind === "input" || kind === "switch" || kind === "merge" ? 0 : 1);
  const off = kind === "switch" || kind === "null" || kind === "merge" ? 8 : 6;
  const tx = x + dx;
  return (
    <g>
      <NodeBody n={n} />
      {Array.from({ length: ins }, (_, i) => (
        <circle
          key={i}
          cx={ins === 4 ? x - 8 + i * 5 : x + (i - (ins - 1) / 2) * 10}
          cy={y - off}
          r="1.400"
          fill={portFill}
        />
      ))}
      <circle cx={x} cy={y + off} r="1.500" fill={portFill} />
      {n.above && (
        <text x={tx} y={y - 4} fontSize="4" fill="#555">
          {n.above}
        </text>
      )}
      <text x={tx} y={y + 2} fontSize="6" fill="#c8c8c8">
        {n.name}
      </text>
      {n.below && (
        <text x={tx} y={y + (kind === "vop" ? 14 : 11)} fontSize="4" fill="#6c96d0">
          {n.below}
        </text>
      )}
      {n.flag && <circle cx={tx + 3} cy={y + 6} r="1.700" fill="#777" />}
    </g>
  );
}

const columns = Array.from({ length: 20 }, (_, i) => 932.3 + i * 50.33);
const rows = Array.from({ length: 34 }, (_, i) => 96.7 + i * 25.17);

function Network() {
  return (
    <Fill viewBox="891 90 1023 861" role="group" aria-label="Node network">
      <text x="1322" y="121" fontSize="19" fill="#424242">
        Education Edition
      </text>
      <text x="1902" y="128" fontSize="23" fontWeight="700" textAnchor="end" fill="#555">
        Geometry
      </text>
      <path
        d={rows.map((y) => columns.map((x) => `M${x - 3.5} ${y}h7M${x} ${y - 3.5}v7`).join("")).join("")}
        stroke="#686868"
        strokeWidth="1"
      />
      <path
        d="M1439 541H1540Q1543 541 1543 544V560L1490 683L1470 706Q1468 709 1465 709H1439Q1436 709 1436 706V544Q1436 541 1439 541z"
        fill="#c87814"
        fillOpacity=".13"
        stroke="#b06a18"
        strokeWidth="1.500"
      />
      <circle cx="1468" cy="759" r="27" fill="#45679c" />
      <circle cx="1468" cy="759" r="17" fill="#8c62bc" />
      <circle cx="1477" cy="885" r="22" fill="none" stroke="#715c36" strokeWidth="9" />
      <g fill="none" stroke="#6487b8" strokeWidth="1.300">
        <path d={WIRES.join("")} />
        <path d={DASHED.join("")} strokeDasharray="2 2" />
        <path
          d="M1468 766Q1466 772 1452 774L1418 777Q1407 778 1407 785M1468 766L1471 785M1468 766Q1470 773 1484 774L1522 776Q1534 777 1534 785"
          stroke="#a9c08a"
        />
      </g>
      {NODES.map((n) => (
        <NetNode key={n.name} n={n} />
      ))}
      <rect x="1455" y="754" width="27" height="10" fill="#f0e890" stroke="#111" />
      <rect x="1454" y="753" width="29" height="12" fill="none" stroke="#f0dc28" strokeWidth="1.500" />
      <path d="M1459 755v8M1462 755v8M1473 755v8" stroke="#c8b83c" strokeWidth="1.300" />
      <rect x="1477" y="755" width="4" height="8" fill="#4a90d8" />
      <path d="M1465 761l2-4h5l-1 4z" fill="#8c8420" />
      <text x="1484" y="754" fontSize="4" fill="#555">
        Attribute Wrangle
      </text>
      <text x="1484" y="760" fontSize="6" fill="#c8c8c8">
        pointwrangle2
      </text>
      <rect x="1464" y="881" width="27" height="10" rx="1" fill="#000" />
      <path d="M1475 884h4M1475 887h2M1478 884l2 4" stroke="#999" />
      <circle cx="1477" cy="880" r="1.500" fill={portFill} />
      <circle cx="1477" cy="892" r="1.500" fill={portFill} />
      <text x="1493" y="887" fontSize="6" fill="#c8c8c8">
        output0
      </text>
      <text x="1493" y="896" fontSize="4" fill="#6c96d0">
        (Output #0)
      </text>
    </Fill>
  );
}

const NetArea = styled.div`
  position: relative;
  flex: 1;
  min-height: 0;
  background: #2f2f2f;
  border-top: 1px solid #000;
`;

type SideItem = [string, string, ("right" | "down")?, boolean?];

const SIDE_A: SideItem[] = [
  ["plane", "Reference plane", "right"],
  ["greenBox", "Construction plane", "right"],
  ["lock", "Lock camera"],
  ["bulbOff", "Headlight off", undefined, true],
  ["rings", "Lighting", "right"],
  ["bulbAdd", "Add light", "right"],
  ["bulbFloor", "Shadow light", "right"],
  ["shades", "Shading", "right"],
  ["eyeCut", "Visibility", "down"],
  ["eyePlay", "Flipbook", "right"],
];

const SIDE_B: SideItem[] = [
  ["dot", "Points"],
  ["dotLine", "Point normals"],
  ["dart", "Point trails"],
  ["pt12", "Point numbers"],
  ["facePin", "Primitive normals"],
  ["face12", "Primitive numbers"],
  ["corner", "Profile curves"],
  ["fold", "Hulls"],
  ["checker", "UV overlay", "right"],
  ["diamond", "Breakpoints"],
  ["cage", "Cages"],
  ["axes", "Axes"],
  ["listRing", "Groups"],
  ["imageOff", "Background image", "right"],
];

const SIDE_C: SideItem[] = [
  ["info", "Info"],
  ["quad", "View layout", undefined, true],
  ["eyeBox", "Display options", "right"],
];

function SideTools({ items }: { items: SideItem[] }) {
  return (
    <>
      {items.map(([icon, label, drop, on]) => (
        <Tool key={icon} icon={icon} label={label} drop={drop} on={on} w={25} h={25} size={15} />
      ))}
    </>
  );
}

export default function App() {
  return (
    <Shell>
      <Global />
      <Rail>
        <Tri $dir="down" $color="#000" />
      </Rail>
      <Desk>
        <Splitter $width={8} $left={2}>
          <Tri $dir="left" />
          <Dots $vertical />
          <Tri $dir="right" />
        </Splitter>

        <Pane $grow={876}>
          <TabBar role="tablist">
            <PaneTab title="Composite View" />
            <PaneTab title="Render View" />
            <PaneTab title="Animation Editor" />
            <PaneTab title="Motion FX View" />
            <PaneTab title="Scene View" active />
            <TabTail />
          </TabBar>
          <PathBar>
            <Tool icon="back" label="Back" size={18} w={25} />
            <Tool icon="fwd" label="Forward" size={18} w={25} />
            <PathField />
            <Tool icon="pin" label="Pin pane" w={22} size={15} />
            <Tool icon="target" label="Link pane" w={24} size={19} />
            <Gap $w={10} />
            <Tool icon="cube" label="Shading cube" drop="down" w={26} />
            <Tool icon="ball" label="Material" drop="down" w={26} />
            <Tool icon="sheet" label="Backdrop" drop="down" w={22} size={20} />
          </PathBar>
          <Bar $h={32}>
            <Grip $w={10} aria-label="Collapse toolbar">
              <Tri $dir="up" $color="#000" />
            </Grip>
            <Tool icon="dots" label="Tools" drop="down" w={26} size={17} />
            <Gap $w={272} />
            <Tool icon="lasso" label="Select" drop="down" w={33} />
            <Tool icon="brush" label="Brush select" drop="down" w={33} />
            <Tool icon="slice" label="Slice select" drop="down" w={31} size={16} />
            <Rule />
            <Tool icon="camera" label="View tool" on size={16} />
            <Tool icon="zoomBox" label="Frame" size={15} />
            <Rule />
            <Tool icon="stop" label="Stop" size={18} />
            <Rule />
            <Tool icon="orb" label="Snapshot" />
            <Tool icon="gear" label="Options" />
            <Spring />
            <Tool icon="people" label="Groups" drop="down" size={16} />
            <Tool icon="help" label="Help" size={17} />
          </Bar>
          <ViewRow>
            <ViewEdge>
              <Tri $dir="right" $color="#000" />
            </ViewEdge>
            <Viewport>
              <Scene />
              <ViewTitle>
                <Icon name="camDim" size={23} />
                View
              </ViewTitle>
              <CamPills>
                <Pill>
                  Persp <Tri $dir="down" $color="#d8d8d8" />
                </Pill>
                <Pill>
                  No cam <Tri $dir="down" $color="#d8d8d8" />
                </Pill>
              </CamPills>
              <ViewMark>Education Edition</ViewMark>
              <Hint>
                Left mouse tumbles. Middle pans. Right dollies. Ctrl+Alt+Left box-zooms. Ctrl+Right zooms.
                Spacebar-Ctrl-Left tilts. Hold L for alternate tumble, dolly, and <Faint>zoom. M or</Faint>
                <br />
                Alt+M for First Person Navigation.
              </Hint>
              <Stats>
                <Fps>&gt;120.0fps</Fps>
                <Ms>3.67ms</Ms>
                <Count>50  prims</Count>
                <Count>200 points</Count>
              </Stats>
            </Viewport>
            <Side>
              <SideHead aria-label="Collapse display options">
                <Tri $dir="right" $color="#000" />
              </SideHead>
              <SideTools items={SIDE_A} />
              <SideRule $m={1} />
              <SideTools items={SIDE_B} />
              <SideRule $m={5} />
              <Tool icon="marker" label="Markers" on drop="right" w={25} h={25} size={16} />
              <Spring />
              <SideRule $m={2} />
              <SideTools items={SIDE_C} />
            </Side>
          </ViewRow>
          <Foot />
        </Pane>

        <Splitter $width={7}>
          <Tri $dir="left" />
          <Dots $vertical />
          <Tri $dir="right" />
        </Splitter>

        <Pane $grow={1023}>
          <TabBar role="tablist">
            <PaneTab title="/obj/geo1/AS_HDA_Decals_Pl..." active bold />
            <TabTail />
          </TabBar>
          <PathBar>
            <Tool icon="back" label="Back" size={18} w={25} />
            <Tool icon="fwd" label="Forward" size={18} w={25} />
            <PathField />
            <Tool icon="yellowPin" label="Pin pane" on size={15} />
            <Tool icon="target" label="Link pane" size={19} />
          </PathBar>
          <Bar $h={24}>
            <Grip $w={10} aria-label="Collapse menu bar">
              <Tri $dir="up" $color="#000" />
            </Grip>
            <Menus>
              {["Add", "Edit", "Go", "View", "Tools", "Layout", "Labs", "Help"].map((m) => (
                <Menu key={m}>{m}</Menu>
              ))}
            </Menus>
            <Spring />
            <Tool icon="tools" label="Tools" size={16} />
            <Tool icon="tree" label="Tree view" size={16} />
            <Tool icon="rows" label="List view" size={15} />
            <Gap $w={16} />
            <Tool icon="palette" label="Colors" size={15} />
            <Tool icon="listBox" label="Shapes" size={15} />
            <Gap $w={16} />
            <Tool icon="boxes" label="Network boxes" size={15} />
            <Tool icon="note" label="Sticky note" size={16} />
            <Tool icon="picture" label="Background image" />
            <Tool icon="crate" label="Gallery" size={16} />
            <Gap $w={16} />
            <Tool icon="search" label="Find" size={16} />
            <Tool icon="eyeBox" label="Display options" size={16} />
            <Gap $w={1} />
          </Bar>
          <NetArea>
            <Network />
          </NetArea>
          <Foot />
        </Pane>

        <Splitter $width={7} $right={0}>
          <Tri $dir="left" />
          <Dots $vertical />
          <Tri $dir="right" />
        </Splitter>
      </Desk>
      <Rail $bottom>
        <Tri $dir="up" $color="#000" />
      </Rail>
    </Shell>
  );
}
